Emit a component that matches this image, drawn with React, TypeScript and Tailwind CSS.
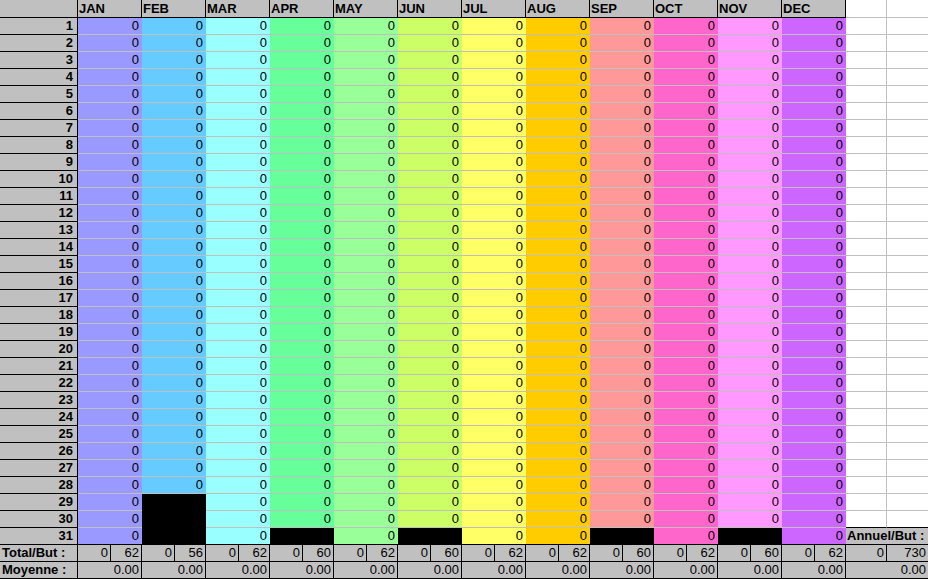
import React from "react";

const months = [
  { name: "JAN", bg: "bg-[#9999ff]", total: 62, black: [] as number[] },
  { name: "FEB", bg: "bg-[#66ccff]", total: 56, black: [29, 30, 31] },
  { name: "MAR", bg: "bg-[#99ffff]", total: 62, black: [] },
  { name: "APR", bg: "bg-[#66ff99]", total: 60, black: [31] },
  { name: "MAY", bg: "bg-[#99ff99]", total: 62, black: [] },
  { name: "JUN", bg: "bg-[#ccff66]", total: 60, black: [31] },
  { name: "JUL", bg: "bg-[#ffff66]", total: 62, black: [] },
  { name: "AUG", bg: "bg-[#ffcc00]", total: 62, black: [] },
  { name: "SEP", bg: "bg-[#ff9999]", total: 60, black: [31] },
  { name: "OCT", bg: "bg-[#ff66cc]", total: 62, black: [] },
  { name: "NOV", bg: "bg-[#ff99ff]", total: 60, black: [31] },
  { name: "DEC", bg: "bg-[#cc66ff]", total: 62, black: [] },
];

const days = Array.from({ length: 31 }, (_, i) => i + 1);

export default function App() {
  return (
    <div
      className="w-[928px] h-[579px] overflow-hidden bg-white text-[13px] leading-[16px] text-black"
      style={{ fontFamily: '"Liberation Sans", Arial, sans-serif' }}
    >
      <div className="grid grid-cols-[78px_repeat(12,64px)_41px_41px] grid-rows-[18px_repeat(33,17px)]">
        {/* header row */}
        <div className="bg-[#c0c0c0] border-b border-r border-black" />
        {months.map((m) => (
          <div
            key={m.name}
            className="bg-[#c0c0c0] border-b border-r border-black flex items-end pl-[1px] font-bold"
          >
            {m.name}
          </div>
        ))}
        <div className="border-b border-r border-[#c0c0c0]" />
        <div className="border-b border-[#c0c0c0]" />

        {/* day rows */}
        {days.map((d) => (
          <React.Fragment key={d}>
            <div className="bg-[#c0c0c0] border-b border-r border-black flex items-center justify-end pr-[4px] font-bold">
              {d}
            </div>
            {months.map((m) =>
              m.black.includes(d) ? (
                <div
                  key={m.name}
                  className={`bg-black border-b ${d === 31 ? "border-black" : "border-black"}`}
                />
              ) : (
                <div
                  key={m.name}
                  className={`${m.bg} border-b ${d === 31 ? "border-black" : "border-[#c0c0c0]"} flex items-center justify-end pr-[3px]`}
                >
                  0
                </div>
              )
            )}
            {d === 31 ? (
              <div className="col-span-2 bg-[#c0c0c0] border-b border-black flex items-center pl-[1px] font-bold whitespace-nowrap">
                Annuel/But :
              </div>
            ) : (
              <>
                <div
                  className={`border-b border-r border-r-[#c0c0c0] ${d === 30 ? "border-b-black" : "border-b-[#c0c0c0]"}`}
                />
                <div className={`border-b ${d === 30 ? "border-black" : "border-[#c0c0c0]"}`} />
              </>
            )}
          </React.Fragment>
        ))}

        {/* totals row */}
        <div className="bg-[#c0c0c0] border-b border-r border-black flex items-center pl-[2px] font-bold whitespace-nowrap">
          Total/But :
        </div>
        {months.map((m) => (
          <div key={m.name} className="bg-[#c0c0c0] border-b border-black flex">
            <div className="w-[33px] border-r border-black flex items-center justify-end pr-[2px]">0</div>
            <div className="flex-1 border-r border-black flex items-center justify-end pr-[2px]">
              {m.total}
            </div>
          </div>
        ))}
        <div className="bg-[#c0c0c0] border-b border-r border-black flex items-center justify-end pr-[2px]">0</div>
        <div className="bg-[#c0c0c0] border-b border-black flex items-center justify-end pr-[2px]">730</div>

        {/* average row */}
        <div className="bg-[#c0c0c0] border-b border-r border-black flex items-center pl-[2px] font-bold whitespace-nowrap">
          Moyenne :
        </div>
        {months.map((m) => (
          <div
            key={m.name}
            className="bg-[#c0c0c0] border-b border-r border-black flex items-center justify-end pr-[2px]"
          >
            0.00
          </div>
        ))}
        <div className="col-span-2 bg-[#c0c0c0] border-b border-black flex items-center justify-end pr-[2px]">
          0.00
        </div>
      </div>
    </div>
  );
}
